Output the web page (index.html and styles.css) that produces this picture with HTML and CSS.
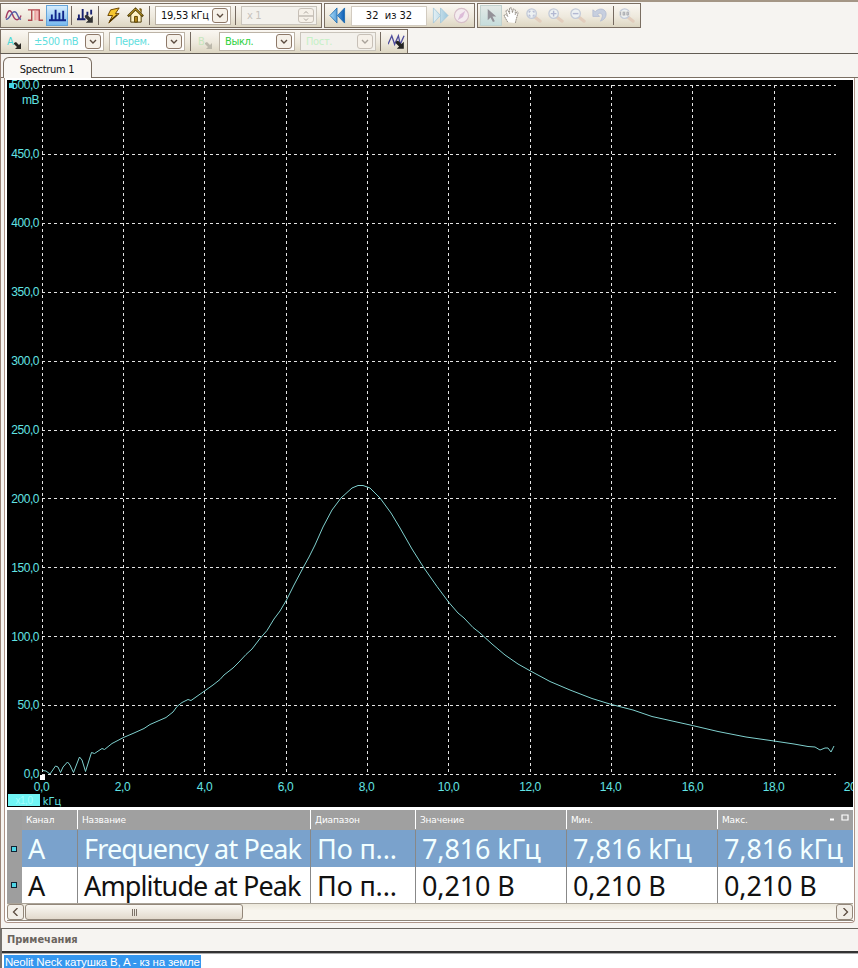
FILE: index.html
```
<!DOCTYPE html>
<html lang="ru">
<head>
  <meta charset="UTF-8" />
  <meta name="viewport" content="width=device-width, initial-scale=1.0" />
  <title>Spectrum 1</title>
  <link rel="stylesheet" href="styles.css">
</head>
<body>
  <svg class="defs" width="0" height="0">
    <defs>
      <linearGradient id="blue" x1="0" x2="1"><stop offset="0" stop-color="#a5dcfa" /><stop offset="1" stop-color="#0a5cb5" /></linearGradient>
      <linearGradient id="paleBlue" x1="0" x2="1"><stop offset="0" stop-color="#e4f0f4" /><stop offset="1" stop-color="#9dc7dc" /></linearGradient>
      <symbol id="corner" viewBox="0 0 8 8"><path d="M0 1l2-1 3 3 2-2v6H1l2-2-3-3z" /></symbol>
      <symbol id="chevron" viewBox="0 0 8 6"><path d="M1 1l3 3 3-3" fill="none" stroke="currentColor" stroke-width="1.4" /></symbol>
      <symbol id="lens" viewBox="0 0 18 18">
        <path d="M11 11l5 4" stroke="#e2cdbd" stroke-width="3.4" stroke-linecap="round" />
        <circle cx="7" cy="7" r="5" fill="#edf1f2" stroke="#c3cad8" stroke-width="1.4" />
      </symbol>
    </defs>
  </svg>

  <header class="toolbars">
    <div class="toolbar-row">
      <div class="toolbar toolbar-main">
        <button class="tool"><svg viewBox="0 0 18 18"><path d="M1 12C3 2 6 2 8 8s6 8 9 1" fill="none" stroke="#a43c63" stroke-width="1.5" /><path d="M1 13C5 14 6 5 10 5s3 8 7 8" fill="none" stroke="#5860a8" stroke-width="1.5" /></svg></button>
        <button class="tool"><svg viewBox="0 0 18 18"><path d="M5 3h8v11H8V4z" fill="#f2b9b8" /><path d="M1 3h12v11h4M1 14h4V3" fill="none" stroke="#b04a50" stroke-width="1.5" /><path d="M8.500 3v11" stroke="#e88c8c" /></svg></button>
        <button class="tool active"><svg viewBox="0 0 18 18"><path d="M0 14h18M3 14V8M7 14V3M11 14V6M15 14V4" fill="none" stroke="#10258a" stroke-width="2" /></svg></button>
        <i class="sep"></i>
        <button class="tool"><svg viewBox="0 0 18 18"><path d="M0 13h9M2 13V8M6 13V2M11 9V5M15 8V3" fill="none" stroke="#18226f" stroke-width="2" /><use href="#corner" x="8" y="8" width="10" height="10" fill="#333" /></svg></button>
        <i class="sep"></i>
        <button class="tool"><svg viewBox="0 0 18 18"><path d="M6 3l9-2-4 6h4L4 17l4-8H3z" fill="#f6c62f" stroke="#684200" /><path d="M5 15l8-7" stroke="#382400" stroke-width="1.2" /></svg></button>
        <button class="tool"><svg viewBox="0 0 18 18"><path d="M4 8v8h11V8L9 3z" fill="#fff4c8" stroke="#4c3900" /><path d="M1 10l8-8 8 8" fill="none" stroke="#4c3900" stroke-width="2.6" /><path d="M2 9l7-7 7 7" fill="none" stroke="#e8be38" /><path d="M8 10h3v6H8zM13 2h2v4" fill="#b98d20" stroke="#5b4300" /></svg></button>
        <i class="sep"></i>
        <div class="combo combo-rate"><span>19,53 kГц</span><b><svg><use href="#chevron" /></svg></b></div>
        <i class="sep"></i>
        <div class="combo spin off"><span>x 1</span><b><svg viewBox="0 0 14 14"><path d="M0 7h14M5 4.500l2-2 2 2M5 9.500l2 2 2-2" fill="none" stroke="currentColor" /></svg></b></div>
      </div>

      <div class="toolbar toolbar-buffer">
        <button class="tool"><svg viewBox="0 0 18 18"><path d="M8.500 1v16L1 9zM16.500 1v16L9 9z" fill="url(#blue)" stroke="#1265ad" stroke-width=".8" /></svg></button>
        <div class="page-field">32&nbsp; из 32</div>
        <button class="tool"><svg viewBox="0 0 18 18"><path d="M1.500 1v16L9 9zM9 1v16l8-8z" fill="url(#paleBlue)" stroke="#a0c6da" stroke-width=".8" /></svg></button>
        <button class="tool"><svg viewBox="0 0 18 18"><circle cx="9" cy="9" r="7.500" fill="#f4ecef" stroke="#d7bfc9" stroke-width="1.200" /><path d="M13 4l-2.500 6.500L5 14l2.500-6z" fill="#dcbcd8" /></svg></button>
      </div>

      <div class="toolbar toolbar-view">
        <button class="tool selected"><svg viewBox="0 0 18 18"><path d="M5 2v12l3-3 2.500 5 2-1-2.500-5h4z" fill="#939198" /></svg></button>
        <button class="tool"><svg viewBox="0 0 18 18"><path d="M5 16L1 9l2-1 2 2-2-6 2-1 2 4V1h2l1 5 1-4 2 1v5l2-3 1 1-2 7-1 4" fill="#fff" stroke="#8f8880" stroke-dasharray="2 .5" /></svg></button>
        <button class="tool"><svg viewBox="0 0 18 18"><use href="#lens" /><path d="M4.500 6V4.500H6M8 4.500h1.500V6M9.500 8v1.500H8M6 9.500H4.500V8" fill="none" stroke="#b2b8d2" stroke-width="1.200" /></svg></button>
        <button class="tool"><svg viewBox="0 0 18 18"><use href="#lens" /><path d="M4 7h6M7 4v6" stroke="#b2b8d2" stroke-width="1.500" /></svg></button>
        <button class="tool"><svg viewBox="0 0 18 18"><use href="#lens" /><path d="M4 7h6" stroke="#b2b8d2" stroke-width="1.500" /></svg></button>
        <button class="tool"><svg viewBox="0 0 18 18"><path d="M2 3v7h7L7 7.500c2.500-2 5.500-.5 5 2.500-.3 2-1 3.500-2 5 4-1.500 6-4 6-7.500C16 2 9 0 4.500 5z" fill="#c7cfdf" stroke="#b0bad0" stroke-width=".8" /></svg></button>
        <i class="sep"></i>
        <button class="tool"><svg viewBox="0 0 18 18"><use href="#lens" /><path d="M1 4.500h12v5H1z" fill="#e4e4e2" /><path d="M2.500 5v4M5.500 5.500h1.500v3H5.500zM9.500 5.500h1.500v3H9.500z" fill="none" stroke="#a6a8ae" /></svg></button>
      </div>
    </div>

    <div class="toolbar toolbar-channels">
      <button class="tool channel channel-a">A<svg><use href="#corner" /></svg></button>
      <div class="combo cyan"><span>±500 mB</span><b><svg><use href="#chevron" /></svg></b></div>
      <div class="combo cyan"><span>Перем.</span><b><svg><use href="#chevron" /></svg></b></div>
      <i class="sep"></i>
      <button class="tool channel channel-b">B<svg><use href="#corner" /></svg></button>
      <div class="combo green"><span>Выкл.</span><b><svg><use href="#chevron" /></svg></b></div>
      <div class="combo pale-green off"><span>Пост.</span><b><svg><use href="#chevron" /></svg></b></div>
      <i class="sep"></i>
      <button class="tool"><svg viewBox="0 0 18 18"><path d="M0 12l4-9 3 9 4-9 2 9 4-9" fill="none" stroke="#4f4d9d" stroke-width="1.400" /><use href="#corner" x="8" y="8" width="10" height="10" fill="#222" /></svg></button>
    </div>
  </header>

  <main class="workspace">
    <div class="tabs"><div class="tab">Spectrum 1</div></div>

    <section class="panel">
      <svg class="chart" viewBox="7 80 846 727">
        <!-- grid -->
        <path class="grid" d="M42 85.500H836M42 154.500H836M42 223.500H836M42 292.500H836M42 361.500H836M42 430.500H836M42 498.500H836M42 567.500H836M42 636.500H836M42 705.500H836M42 774.500H836" />
        <path class="grid" d="M42.500 85V774M123.500 85V774M204.500 85V774M286.500 85V774M367.500 85V774M448.500 85V774M530.500 85V774M611.500 85V774M692.500 85V774M774.500 85V774" />
        <polyline class="trace" points="42.500,770.500 46,771 50,774 55.500,766 58,767 60.500,772.500 63,767 67.500,762 70,765 73.500,772.500 79.500,757 82,760 85.500,771.500 91.500,752.500 94.500,753.500 102,748.500 104.500,749.500 112,743.500 123.500,737.500 134,733 144,728.500 150,724.500 158,721 166,717.500 173,712 177,706.500 182,702.500 188,699.500 191,700.500 196,697 204.500,691 213,685 220,679.500 224,675 233,668 239,662 246,654.500 252,649 260,638.500 267,630.500 274,619 280,611 286.500,600 294,585 303.500,567 309,557 315,545 323,527 332,510 341,498 352,488 358,485.500 363,485.500 370,488 376,494 380,498 391,513 400,528 412,549 424,568 437,586.500 448.500,602 458,613 464,618 473,627.500 480,633 492,644 505,655 518,664 530.500,671 550,681.500 570,690 592,698.500 611.500,704.500 633,710 652,716.500 670,720.500 692.500,725.500 718,731.500 746,737 774,741 794,744 808,746.500 815,747 820,750 825,748 828,748 831,752 834,746" />
        <g class="labels labels-y">
          <text x="39" y="89">500,0</text>
          <text x="39" y="104">mB</text>
          <text x="39" y="158">450,0</text>
          <text x="39" y="227">400,0</text>
          <text x="39" y="296">350,0</text>
          <text x="39" y="365">300,0</text>
          <text x="39" y="434">250,0</text>
          <text x="39" y="503">200,0</text>
          <text x="39" y="572">150,0</text>
          <text x="39" y="641">100,0</text>
          <text x="39" y="709">50,0</text>
          <text x="39" y="778">0,0</text>
        </g>
        <rect class="marker" x="9" y="83" width="5" height="5" />
        <rect x="40" y="775" width="5" height="5" fill="#fff" />
        <rect class="offset" x="8" y="794" width="32" height="12" />
        <g class="labels labels-x">
          <text x="41.500" y="791">0,0</text>
          <text x="122.500" y="791">2,0</text>
          <text x="204.500" y="791">4,0</text>
          <text x="285.500" y="791">6,0</text>
          <text x="366.500" y="791">8,0</text>
          <text x="448.500" y="791">10,0</text>
          <text x="530" y="791">12,0</text>
          <text x="610.500" y="791">14,0</text>
          <text x="692.500" y="791">16,0</text>
          <text x="773.500" y="791">18,0</text>
          <text x="854.500" y="791">20,0</text>
          <text x="24" y="804" class="offset-text">x1,0</text>
          <text x="52" y="805" class="unit">kГц</text>
        </g>
      </svg>

      <div class="measures">
        <div class="row head">
          <span></span><span>Канал</span><span>Название</span><span>Диапазон</span><span>Значение</span><span>Мин.</span>
          <span class="last">Макс.<svg viewBox="0 0 20 12"><path d="M1 7.500h4" stroke="#fff" stroke-width="2" /><path d="M13 3h6v5h-6zM12.500 3h7" fill="none" stroke="#fff" stroke-width="1.200" /></svg></span>
        </div>
        <div class="row current">
          <span><i></i></span><span>A</span><span class="name">Frequency at Peak</span><span>По п...</span><span>7,816 kГц</span><span>7,816 kГц</span><span>7,816 kГц</span>
        </div>
        <div class="row">
          <span><i></i></span><span>A</span><span class="name">Amplitude at Peak</span><span>По п...</span><span>0,210 В</span><span>0,210 В</span><span>0,210 В</span>
        </div>
      </div>

      <div class="scrollbar">
        <button><svg viewBox="0 0 8 8"><path d="M5.500 0l-4 4 4 4" /></svg></button>
        <div class="thumb"><i></i><i></i><i></i></div>
        <button><svg viewBox="0 0 8 8"><path d="M2.500 0l4 4-4 4" /></svg></button>
      </div>
    </section>
  </main>

  <footer class="notes">
    <h2>Примечания</h2>
    <div class="notes-text"><mark>Neolit Neck катушка B, A - кз на земле</mark></div>
  </footer>
</body>
</html>
```
FILE: styles.css
```
:root {
  --bg: #f6f4f1;
  --line: #7a6e62;
  --cyan: #62e4e4;
  --ui: "DejaVu Sans Condensed", "Noto Sans", sans-serif;
}

* {
  margin: 0;
  padding: 0;
  box-sizing: border-box;
}

body {
  width: 858px;
  height: 968px;
  overflow: hidden;
  display: flex;
  flex-direction: column;
  background: var(--bg);
  color: #111;
  font-family: var(--ui);
  font-size: 11px;
}

.defs {
  position: absolute;
}

button {
  font: inherit;
  border: none;
  background: none;
}

/* Toolbars */
.toolbars {
  height: 54px;
  flex: none;
  border-top: 2px solid #a49686;
  border-bottom: 1px solid #625c54;
}

.toolbar-row {
  display: flex;
  gap: 2px;
  height: 27px;
  padding-top: 1px;
}

.toolbar {
  display: flex;
  align-items: center;
  height: 25px;
  border: 1px solid var(--line);
  background: linear-gradient(#faf7f2, #eee9dd 55%, #ddd6c2);
}

.toolbar-main {
  width: 322px;
  padding-left: 1px;
}

.toolbar-buffer {
  width: 151px;
  padding-left: 1px;
}

.toolbar-view {
  width: 164px;
  padding-left: 2px;
}

.toolbar-channels {
  width: 408px;
  height: 24px;
  padding-left: 3px;
  border-bottom: none;
}

.tool {
  flex: none;
  width: 22px;
  height: 21px;
  display: flex;
  align-items: center;
  justify-content: center;
}

.tool svg {
  width: 17px;
  height: 17px;
}

.tool.active {
  background: linear-gradient(#d5ecfc, #78baf0);
  border: 1px solid #65a5da;
}

.tool.selected {
  background: linear-gradient(#e3e9e6, #c7dddc);
  border: 1px solid #c2d2cf;
}

.sep {
  flex: none;
  width: 1px;
  height: 19px;
  margin: 0 2px 0 3px;
  background: #756a60;
}

.toolbar-main .sep:nth-of-type(2) {
  margin: 0 3px 0 2px;
}

.toolbar-main .sep:nth-of-type(3) {
  margin-right: 5px;
}

.toolbar-main .sep:nth-of-type(4) {
  margin: 0 5px 0 4px;
}

.combo {
  flex: none;
  display: flex;
  align-items: center;
  justify-content: space-between;
  width: 76px;
  height: 19px;
  padding: 0 2px 0 5px;
  background: #fff;
  border: 1px solid #bcb3a6;
  white-space: nowrap;
}

.combo b {
  width: 16px;
  height: 15px;
  display: flex;
  align-items: center;
  justify-content: center;
  border: 1px solid #8d7868;
  border-radius: 3px;
  background: #f6f1e9;
  color: #5b4b3f;
}

.combo b svg {
  width: 8px;
  height: 6px;
}

.combo span {
  letter-spacing: -0.35px;
}

.combo-rate span {
  letter-spacing: -0.25px;
}

.combo.off {
  background: #f3f1ec;
  border-color: #c9c4bb;
  color: #c7c3bc;
}

.combo.off b {
  border-color: #c7c0b7;
  color: #a9a39b;
}

.spin b svg {
  width: 14px;
  height: 14px;
}

.cyan span {
  color: #62dede;
}

.green span {
  color: #2ed13c;
}

.pale-green span {
  color: #c5f0c6;
}

.page-field {
  width: 76px;
  height: 20px;
  margin: 0 3px;
  line-height: 18px;
  text-align: center;
  background: #fff;
  border: 1px solid #d2cbc0;
}

.toolbar-buffer .page-field ~ .tool {
  margin-left: -1px;
}

.toolbar-view .tool:not(.selected) svg {
  margin-right: 3px;
}

.toolbar-view .sep {
  margin: 0 3px 0 1px;
}

.toolbar-channels .combo {
  margin-right: 5px;
}

.toolbar-channels .sep {
  margin: 0 4px 0 0;
}

.toolbar-channels .combo.off {
  margin-right: 4px;
}

.channel {
  width: 24px;
  padding-left: 3px;
  justify-content: flex-start;
}

.channel svg {
  width: 8px;
  height: 8px;
  margin-top: 8px;
}

.channel-a {
  color: #48d8d8;
}

.channel-a svg {
  fill: #2c2925;
}

.channel-b {
  color: #c7e6bd;
}

.channel-b svg {
  fill: #bdb9ac;
}

/* Spectrum view */
.workspace {
  height: 874px;
  flex: none;
  border-left: 1px solid #9b8578;
}

.tabs {
  height: 24px;
  padding: 3px 0 0 2px;
  border-bottom: 1px solid var(--line);
}

.tab {
  width: 89px;
  height: 21px;
  padding-right: 1px;
  border: 1px solid var(--line);
  border-bottom: none;
  border-radius: 6px 6px 0 0;
  background: #faf8f5;
  line-height: 23px;
  text-align: center;
  letter-spacing: -0.3px;
}

.panel {
  width: 851px;
  height: 845px;
  margin-left: 3px;
  padding: 2px 0 0 2px;
  border: 1px solid #ad9488;
  border-top: none;
  border-radius: 0 0 4px 4px;
  background: #fff;
}

.chart {
  display: block;
  width: 846px;
  height: 727px;
  background: #000;
}

.grid {
  fill: none;
  stroke: #e4e4e4;
  stroke-width: 1;
  stroke-dasharray: 3 3;
}

.trace {
  fill: none;
  stroke: #7fd0ce;
  stroke-width: 1;
}

.marker {
  fill: #42d5e4;
}

.labels {
  fill: var(--cyan);
  font-family: "Liberation Sans", sans-serif;
  font-size: 12px;
  letter-spacing: -0.45px;
}

.labels-y {
  text-anchor: end;
}

.labels-x {
  text-anchor: middle;
}

.offset {
  fill: #70f5f5;
}

.offset-text {
  fill: #a4ffff;
  font-size: 10px;
}

.unit {
  font-family: var(--ui);
  font-size: 11px;
  letter-spacing: 0;
}

/* Measurements */
.measures {
  width: 846px;
  margin-top: 3px;
}

.row {
  display: grid;
  grid-template-columns: 15px 55px 233px 105px 151px 151px 136px;
  height: 36px;
  background: #fff;
  font-family: "Noto Sans", sans-serif;
  font-size: 27px;
  line-height: 38px;
}

.row span {
  padding-left: 6px;
  border-left: 1px solid #888;
  letter-spacing: -0.15px;
  white-space: nowrap;
  overflow: hidden;
}

.row span:nth-child(-n+2) {
  border-left: none;
}

.row span:first-child {
  display: flex;
  align-items: center;
  padding-left: 4px;
  background: #9e9e9e;
}

.row .name {
  letter-spacing: -0.87px;
}

.row i {
  width: 6px;
  height: 6px;
  border: 1px solid #123;
  background: #50d5e5;
}

.current {
  height: 37px;
  background: #7aa2cc;
  color: #f2ffff;
}

.head {
  height: 20px;
  background: #a0a0a0;
  color: #fff;
  font-family: "DejaVu Sans", sans-serif;
  font-size: 9px;
  line-height: 21px;
}

.head span {
  height: 19px;
  padding-left: 4px;
  border-left-color: #fff;
}

.head span:first-child {
  height: 20px;
}

.last {
  display: flex;
  justify-content: space-between;
  padding-right: 4px;
}

.last svg {
  width: 20px;
  height: 12px;
  margin-top: 2px;
}

.scrollbar {
  display: flex;
  width: 846px;
  height: 18px;
  border-top: 1px solid #aaa398;
  border-bottom: 1px solid #8e8579;
  background: linear-gradient(#ece8dc, #f8f5ee 40%);
}

.scrollbar button {
  display: flex;
  align-items: center;
  justify-content: center;
  width: 17px;
  border: 1px solid #93877a;
  border-radius: 3px;
  background: #f2eee7;
}

.scrollbar button:last-child {
  margin-left: auto;
}

.scrollbar svg {
  width: 8px;
  height: 8px;
  fill: none;
  stroke: #5b4b3f;
  stroke-width: 1.3;
}

.thumb {
  display: flex;
  align-items: center;
  justify-content: center;
  gap: 1px;
  width: 218px;
  margin-left: 1px;
  border: 1px solid #93877a;
  border-radius: 3px;
  background: linear-gradient(#faf8f3, #e2d9cc);
}

.thumb i {
  width: 1px;
  height: 7px;
  background: #7d7268;
}

/* Notes */
.notes {
  flex: 1;
  border-top: 1px solid #6a655f;
  border-left: 2px solid #77736e;
}

.notes h2 {
  height: 24px;
  padding-left: 5px;
  border-bottom: 2px solid #333;
  color: #6b655e;
  font-size: 11px;
  line-height: 21px;
}

.notes-text {
  height: 16px;
  padding: 1px 0 0 2px;
  background: #fff;
  border-top: 1px solid #aaa;
}

.notes mark {
  display: block;
  width: 197px;
  height: 14px;
  padding-left: 1px;
  background: #3597ef;
  color: #fff;
  font-family: "Liberation Sans", sans-serif;
  font-size: 11.5px;
  letter-spacing: -0.18px;
  line-height: 14px;
  white-space: nowrap;
}
```
